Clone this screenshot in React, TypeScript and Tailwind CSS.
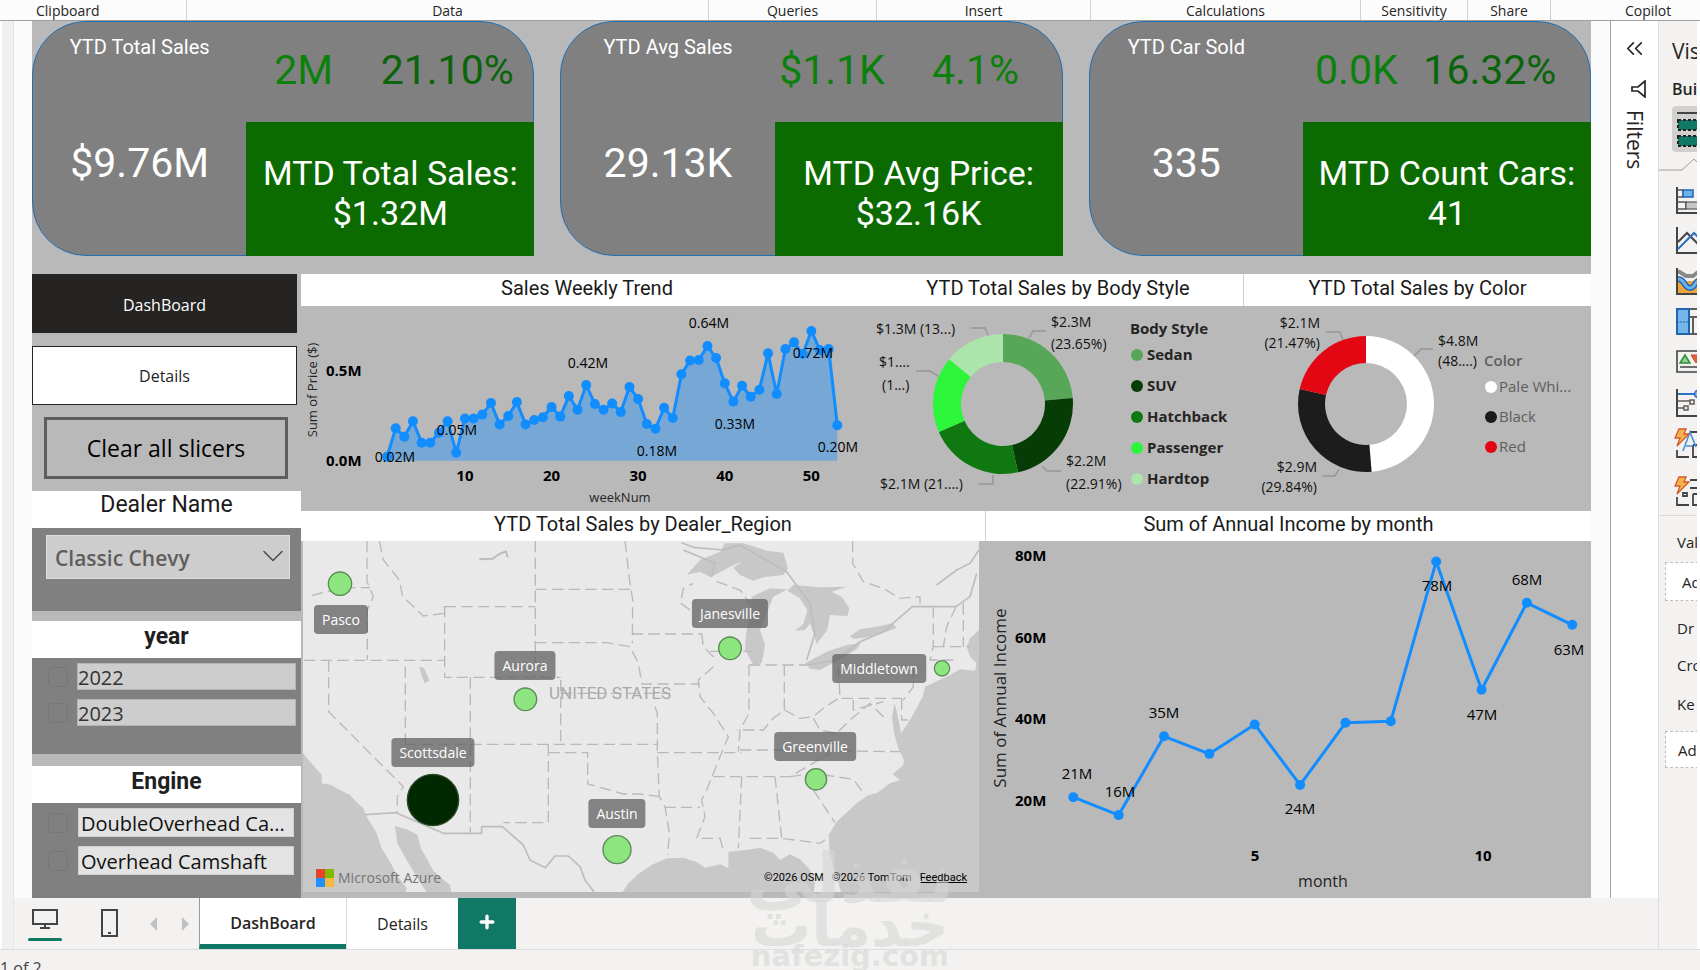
import { ChevronDown, ChevronsLeft, Plus } from "lucide-react";

const kpis = [
    { title: "YTD Total Sales", value: "$9.76M", diff: "2M", growth: "21.10%", mtdLabel: "MTD Total Sales:", mtd: "$1.32M", growthColor: "text-[#0a640a]", inset: "" },
    { title: "YTD Avg Sales", value: "29.13K", diff: "$1.1K", growth: "4.1%", mtdLabel: "MTD Avg Price:", mtd: "$32.16K", growthColor: "text-[#0b800b]", inset: "" },
    { title: "YTD Car Sold", value: "335", diff: "0.0K", growth: "16.32%", mtdLabel: "MTD Count Cars:", mtd: "41", growthColor: "text-[#0a640a]", inset: "pr-5" },
];

// weekly sales, thousands of dollars
const weekly = [
    22, 179, 133, 218, 100, 100, 155, 218, 44, 234, 234, 255, 319, 201, 247, 325, 201, 225, 240, 297, 244, 358, 282, 419, 314, 282, 317,
    269, 408, 341, 203, 177, 293, 236, 478, 555, 557, 635, 568, 428, 327, 415, 354, 393, 594, 369, 618, 655, 590, 718, 612, 618, 196,
];

const weeklyLabels = [
    { text: "0.02M", x: 94, y: 156 },
    { text: "0.05M", x: 156, y: 129 },
    { text: "0.42M", x: 287, y: 62 },
    { text: "0.18M", x: 356, y: 150 },
    { text: "0.64M", x: 408, y: 22 },
    { text: "0.33M", x: 434, y: 123 },
    { text: "0.72M", x: 512, y: 52 },
    { text: "0.20M", x: 537, y: 146 },
];

// monthly income, millions
const income = [20.7, 16.3, 35.6, 31.3, 38.5, 23.7, 38.9, 39.3, 78.4, 47, 68.3, 62.9];

const incomeLabels = [
    { text: "21M", x: 92, y: 238 },
    { text: "16M", x: 135, y: 256 },
    { text: "35M", x: 179, y: 177 },
    { text: "24M", x: 315, y: 273 },
    { text: "78M", x: 452, y: 50 },
    { text: "47M", x: 497, y: 179 },
    { text: "68M", x: 542, y: 44 },
    { text: "63M", x: 584, y: 114 },
];

const bodyStyles = [
    { name: "Sedan", share: 23.65, color: "#58a758" },
    { name: "SUV", share: 22.91, color: "#063c06" },
    { name: "Hatchback", share: 21.9, color: "#107810" },
    { name: "Passenger", share: 17.6, color: "#2df53a" },
    { name: "Hardtop", share: 13.94, color: "#abe5ab" },
];

const colors = [
    { name: "Pale Whi...", share: 48.69, color: "#ffffff" },
    { name: "Black", share: 29.84, color: "#1c1c1c" },
    { name: "Red", share: 21.47, color: "#e30613" },
];

const cities = [
    { name: "Pasco", x: 38, y: 64 },
    { name: "Aurora", x: 222, y: 110 },
    { name: "Scottsdale", x: 130, y: 197 },
    { name: "Austin", x: 314, y: 258 },
    { name: "Janesville", x: 427, y: 58 },
    { name: "Middletown", x: 576, y: 113 },
    { name: "Greenville", x: 512, y: 191 },
];

const ribbon = [
    { name: "Data", width: "w-[522px]" },
    { name: "Queries", width: "w-[168px]" },
    { name: "Insert", width: "w-[214px]" },
    { name: "Calculations", width: "w-[270px]" },
    { name: "Sensitivity", width: "w-[107px]" },
    { name: "Share", width: "w-[83px]" },
];

const DIN = "font-[Roboto,'Noto_Sans',sans-serif]";

function Ribbon() {
    return (
        <header className="flex h-[21px] shrink-0 items-stretch border-b border-[#a0a0a0] bg-[#fcfcfc] text-sm leading-[22px] text-[#252423]">
            <div className="w-[187px] shrink-0 border-r border-[#d2d0ce] pl-9">Clipboard</div>
            {ribbon.map((g) => (
                <div key={g.name} className={`${g.width} shrink-0 border-r border-[#d2d0ce] text-center`}>
                    {g.name}
                </div>
            ))}
            <div className="min-w-0 flex-1 pl-[74px]">Copilot</div>
        </header>
    );
}

function KpiCard({ kpi }: { kpi: (typeof kpis)[number] }) {
    return (
        <article className={`${DIN} grid h-[235px] grid-cols-[214fr_288fr] rounded-l-[54px] rounded-tr-[54px] border border-[#1f70b5] bg-[#808080] text-white`}>
            <div className={`flex flex-col items-center pt-[11px] ${kpi.inset}`}>
                <h2 className="text-xl leading-7">{kpi.title}</h2>
                <p className="pt-[78px] text-[41px] leading-[48px]">{kpi.value}</p>
            </div>
            <div className="flex flex-col">
                <div className={`grid h-[100px] shrink-0 grid-cols-[2fr_3fr] pt-6 text-center text-[41px] leading-[48px] text-[#0b800b] ${kpi.inset}`}>
                    <span>{kpi.diff}</span>
                    <span className={kpi.growthColor}>{kpi.growth}</span>
                </div>
                <div className="-mr-px -mb-px flex flex-1 flex-col justify-center bg-[#0b6a00] pt-2 text-center text-[34px] leading-10 whitespace-nowrap">
                    <p>{kpi.mtdLabel}</p>
                    <p>{kpi.mtd}</p>
                </div>
            </div>
        </article>
    );
}

function Sidebar() {
    return (
        <aside className="flex w-[269px] shrink-0 flex-col">
            <button className="h-[59px] w-[265px] bg-[#252423] pt-0.5 text-base text-white">DashBoard</button>
            <button className="mt-[13px] h-[59px] w-[265px] border border-[#252423] bg-white text-base text-[#252423]">Details</button>
            <button className="mt-3 ml-3 h-[62px] w-[244px] border-[3px] border-[#605e5c] text-[23px] text-black">Clear all slicers</button>

            <section className="mt-3 bg-[#808080]">
                <label htmlFor="dealer" className={`${DIN} block h-[37px] bg-white text-center text-[23px] leading-7 text-[#1a1a1a]`}>
                    Dealer Name
                </label>
                <div className="relative h-[83px] pt-[7px] pr-[11px] pl-3.5">
                    <select
                        id="dealer"
                        className="h-11 w-full appearance-none border border-[#dcdcdc] bg-[#cdcdcd] pt-1 pl-2 text-[21px] font-semibold text-[#605e5c]"
                    >
                        <option>Classic Chevy</option>
                    </select>
                    <ChevronDown className="pointer-events-none absolute top-2.5 right-2.5 size-9 text-[#4a4a4a]" strokeWidth={1} />
                </div>
            </section>

            <section className="mt-2.5 h-[133px] bg-[#808080]">
                <h3 className={`${DIN} h-[37px] bg-white text-center text-[23px] leading-8 font-bold text-[#1f1f1f]`}>year</h3>
                <div className="flex flex-col gap-[9px] pt-[5px] pr-[5px] pl-4">
                    {["2022", "2023"].map((y) => (
                        <label key={y} className="flex h-[27px] items-center gap-[9px] text-xl text-[#333]">
                            <input type="checkbox" className="size-5 shrink-0 appearance-none rounded-sm border border-[#777]" />
                            <span className="h-full flex-1 border border-[#b4b4b4] bg-[#cdcdcd] leading-[27px]">{y}</span>
                        </label>
                    ))}
                </div>
            </section>

            <section className="mt-3 flex-1 bg-[#808080]">
                <h3 className={`${DIN} h-[37px] bg-white text-center text-[23px] leading-8 font-bold text-[#1f1f1f]`}>Engine</h3>
                <div className="flex flex-col gap-[9px] pt-[5px] pr-[7px] pl-4">
                    {["DoubleOverhead Ca...", "Overhead Camshaft"].map((e) => (
                        <label key={e} className="flex h-[29px] items-center gap-2.5 text-xl text-[#111]">
                            <input type="checkbox" className="size-5 shrink-0 appearance-none rounded-sm border border-[#777]" />
                            <span className="h-full flex-1 border border-[#d0d0d0] bg-[#e3e3e3] pl-0.5 leading-[29px] whitespace-nowrap">{e}</span>
                        </label>
                    ))}
                </div>
            </section>
        </aside>
    );
}

function WeeklyTrend() {
    const pts = weekly.map((v, i) => ({ x: 86 + i * 8.66, y: 154.7 - v * 0.1807 }));
    const line = pts.map((p) => `${p.x},${p.y}`).join(" ");
    return (
        <svg viewBox="0 0 572 205" className="block w-full">
            <polygon points={`86,154.7 ${line} 536.3,154.7`} fill="#118dff" fillOpacity="0.4" />
            <polyline points={line} fill="none" stroke="#118dff" strokeWidth="3" strokeLinejoin="round" />
            {pts.map((p, i) => (
                <circle key={i} cx={p.x} cy={p.y} r="5" fill="#118dff" />
            ))}
            <g fontSize="14" fill="#000" textAnchor="middle">
                {weeklyLabels.map((l) => (
                    <text key={l.text} x={l.x} y={l.y}>{l.text}</text>
                ))}
            </g>
            <g fontSize="15" fontWeight="700" fill="#000">
                <text x="25" y="70">0.5M</text>
                <text x="25" y="160">0.0M</text>
                {[10, 20, 30, 40, 50].map((w) => (
                    <text key={w} x={86 + (w - 1) * 8.66} y="175" textAnchor="middle">{w}</text>
                ))}
            </g>
            <text x="319" y="196" fontSize="13" fill="#252423" textAnchor="middle">weekNum</text>
            <text transform="translate(16 84) rotate(-90)" fontSize="13" fill="#252423" textAnchor="middle">Sum of Price ($)</text>
        </svg>
    );
}

function Donut({ data, cx, cy, outer, inner }: { data: typeof bodyStyles; cx: number; cy: number; outer: number; inner: number }) {
    const at = (pct: number, r: number) => {
        const a = (pct / 100) * Math.PI * 2;
        return `${cx + r * Math.sin(a)} ${cy - r * Math.cos(a)}`;
    };
    let sum = 0;
    return (
        <g>
            {data.map((d) => {
                const from = sum;
                const to = (sum += d.share);
                return (
                    <path
                        key={d.name}
                        d={`M${at(from, outer)} A${outer} ${outer} 0 0 1 ${at(to, outer)} L${at(to, inner)} A${inner} ${inner} 0 0 0 ${at(from, inner)} Z`}
                        fill={d.color}
                    />
                );
            })}
        </g>
    );
}

function BodyStyleChart() {
    return (
        <svg viewBox="0 0 370 205" className="block w-full">
            <Donut data={bodyStyles} cx={130} cy={98} outer={70} inner={42} />
            <g fill="none" stroke="#979797" strokeWidth="1.5">
                <path d="M98 22h14l3 7" />
                <path d="M173 25h-13l-4 7" />
                <path d="M43 65h14l8 5" />
                <path d="M105 178h15v-9" />
                <path d="M188 165h-14l-5-5" />
            </g>
            <g fontSize="14" fill="#111">
                <text x="3" y="28">$1.3M (13...)</text>
                <text x="178" y="21">$2.3M</text>
                <text x="178" y="43">(23.65%)</text>
                <text x="6" y="61">$1....</text>
                <text x="9" y="84">(1...)</text>
                <text x="7" y="183">$2.1M (21....)</text>
                <text x="193" y="160">$2.2M</text>
                <text x="193" y="183">(22.91%)</text>
            </g>
            <g fontSize="15" fontWeight="700" fill="#252423">
                <text x="257" y="28">Body Style</text>
                {bodyStyles.map((b, i) => (
                    <g key={b.name}>
                        <circle cx="264" cy={49 + i * 31} r="6" fill={b.color} />
                        <text x="274" y={54 + i * 31}>{b.name}</text>
                    </g>
                ))}
            </g>
        </svg>
    );
}

function ColorChart() {
    return (
        <svg viewBox="0 0 348 205" className="block w-full">
            <Donut data={colors} cx={123} cy={98} outer={68} inner={41} />
            <g fill="none" stroke="#979797" strokeWidth="1.5">
                <path d="M83 26h14l3 8" />
                <path d="M190 43h-12l-7 7" />
                <path d="M79 170h13l4-7" />
            </g>
            <g fontSize="14" fill="#111">
                <text x="77" y="22" textAnchor="end">$2.1M</text>
                <text x="77" y="42" textAnchor="end">(21.47%)</text>
                <text x="195" y="40">$4.8M</text>
                <text x="195" y="60">(48....)</text>
                <text x="74" y="166" textAnchor="end">$2.9M</text>
                <text x="74" y="186" textAnchor="end">(29.84%)</text>
            </g>
            <text x="241" y="60" fontSize="15" fontWeight="600" fill="#605e5c">Color</text>
            {colors.map((c, i) => (
                <g key={c.name}>
                    <circle cx="248" cy={81 + i * 30} r="6" fill={c.color} />
                    <text x="256" y={86 + i * 30} fontSize="15" fill="#605e5c">{c.name}</text>
                </g>
            ))}
        </svg>
    );
}

function IncomeChart() {
    const pts = income.map((v, i) => ({ x: 88.3 + i * 45.36, y: 259 - (v - 20) * 4.083 }));
    return (
        <svg viewBox="0 0 606 357" className="block w-full">
            <polyline points={pts.map((p) => `${p.x},${p.y}`).join(" ")} fill="none" stroke="#118dff" strokeWidth="3" strokeLinejoin="round" />
            {pts.map((p, i) => (
                <circle key={i} cx={p.x} cy={p.y} r="5" fill="#118dff" />
            ))}
            <g fontSize="15" fill="#000" textAnchor="middle">
                {incomeLabels.map((l) => (
                    <text key={l.text} x={l.x} y={l.y}>{l.text}</text>
                ))}
            </g>
            <g fontSize="15" fontWeight="700" fill="#000">
                {[80, 60, 40, 20].map((v, i) => (
                    <text key={v} x="30" y={20 + i * 81.5}>{v}M</text>
                ))}
                <text x="270" y="320" textAnchor="middle">5</text>
                <text x="498" y="320" textAnchor="middle">10</text>
            </g>
            <text x="338" y="346" fontSize="16" fill="#252423" textAnchor="middle">month</text>
            <text transform="translate(21 157) rotate(-90)" fontSize="17" fill="#252423" textAnchor="middle">Sum of Annual Income</text>
        </svg>
    );
}

function DealerMap() {
    return (
        <div className="relative mr-1.5 ml-0.5 overflow-hidden bg-[#e9e9e9]">
            <svg viewBox="39 123 2028 1053" className="block w-full">
                {/* oceans */}
                <g fill="#c8c8c8">
                    <path d="M39 760L60 785 95 825 95 850 125 856 150 870 180 885 196 903 220 925 230 950 260 1000 275 1045 300 1085 320 1125 350 1165 345 1180H39z" />
                    <path d="M315 978L350 988 383 1005 392 1045 410 1075 430 1112 455 1135 480 1155 485 1180H412L380 1130 350 1080 322 1030z" />
                    <path d="M995 1180L1015 1150 1045 1122 1085 1095 1130 1075 1180 1073 1220 1086 1245 1103 1290 1093 1315 1105V1055L1370 1050 1410 1043 1450 1058 1470 1080 1500 1063 1530 1078 1560 1110 1575 1150 1570 1180z" />
                    <path d="M1655 1180L1630 1100 1618 1050 1616 1005 1640 965 1700 910 1735 885 1760 880 1800 850 1830 840 1808 822 1840 795 1842 780 1825 745 1812 700 1806 650 1814 610 1824 650 1833 700 1860 660 1898 590 1905 560 1980 525 2010 508 2055 512 2060 490 2040 470 2030 440 2040 415 2070 388V1180z" />
                </g>
                {/* great lakes */}
                <g fill="#c8c8c8">
                    <path d="M1190 225L1230 180 1290 155 1305 130 1360 130 1430 152 1480 158 1494 205 1480 225 1420 232 1390 242 1350 225 1330 203 1355 185 1320 200 1262 232 1230 215z" />
                    <path d="M1385 290L1440 265 1492 268 1450 290 1432 335 1410 390 1425 435 1415 490 1390 495 1365 450 1368 400 1380 350z" />
                    <path d="M1492 272L1510 255 1590 262 1670 260 1625 275 1655 290 1678 325 1672 348 1620 345 1612 390 1580 432 1570 400 1560 370 1545 390 1515 392 1540 372 1552 330 1530 295z" />
                    <path d="M1545 490L1610 455 1670 435 1712 430 1700 448 1650 478 1590 510 1560 506z" />
                    <path d="M1680 408L1710 388 1760 380 1808 370 1820 384 1770 402 1720 414 1690 416z" />
                    <path d="M388 500l14 4 16 38-14 8-10-26z" />
                </g>
                <path d="M1840 548L1985 512 1978 525 1900 553z" fill="#e9e9e9" />
                {/* national borders */}
                <g fill="none" stroke="#bdbdbd" strokeWidth="5" strokeLinejoin="round">
                    <path d="M225 944L318 938 460 1000H575V980H637L700 1035 720 1080 766 1103 795 1068H835L870 1100 885 1140 912 1175" />
                    <path d="M1175 128L1210 142 1300 150 1350 135 1490 215 1515 250 1560 310 1575 400 1550 480M1180 150L1275 190 1265 230M1550 495L1640 480 1710 425 1780 395 1867 320H1998L2040 290 2060 220M1940 255L2000 210 2040 190 2067 150" />
                    <path d="M568 178l40-2 20-14 20-8 5 18" strokeWidth="6" />
                </g>
                {/* state lines */}
                <g fill="none" stroke="#b9b9b9" strokeWidth="4" strokeDasharray="34 16">
                    <path d="M231 123V245L250 290 232 330V480M268 123L280 180 328 240 338 290 400 348 463 340V318M65 287L110 275 190 263H240M42 481H463M464 318V532H812M464 320H736M736 123V532M736 268H1025M1005 123L1020 250 1028 300 1027 430M736 428H950L1020 440 1045 490 1056 552H1230M1025 402H1235M116 481V635L340 860 322 890 322 938M346 500V735M541 532V998M812 540V733M541 733H1102M345 733H541M775 733V968H640M775 758H893V852L1000 882H1050L1110 890M1095 620L1102 640V757L1108 890 1125 920 1138 1000 1133 1065M812 580H1140M1102 758H1355M1123 922H1230" />
                    <path d="M1235 400L1240 440 1275 475M1260 454H1390M1200 330L1172 310 1180 265 1210 250M1280 245L1350 270 1380 310M1270 500L1225 540 1230 590 1270 640 1315 710 1290 770 1250 870 1235 900 1245 950 1220 1015H1290L1300 1050M1377 495V640L1350 690 1345 755M1483 495V630L1450 655 1420 690 1340 690M1377 495H1550M1483 630L1530 655 1570 650 1600 625 1645 595M1645 500L1650 595H1835M1350 750L1450 750 1830 755M1270 830H1500L1620 760M1355 830L1345 1045M1455 830L1475 1015M1380 1015H1475L1590 1030 1605 1020M1570 870L1635 968M1500 830L1570 820 1690 838 1725 885M1570 655L1590 690 1640 700 1680 660 1740 610 1790 660M1690 600V630L1780 605M1835 595V660H1860M1688 123V190L1720 245 1780 265 1830 295 1890 290V320M1930 320V440L1920 480H1990M1998 320L1970 380 1960 440M2020 310V440M1930 440H2040M1870 500V560L1840 600" />
                </g>
                <g fill="#8de57f" stroke="#5c8a58" strokeWidth="4">
                    <circle cx="150" cy="251" r="35" />
                    <circle cx="706" cy="598" r="34" />
                    <circle cx="429" cy="900" r="77" fill="#022802" stroke="#2c4a2c" />
                    <circle cx="981" cy="1049" r="42" />
                    <circle cx="1320" cy="445" r="34" />
                    <circle cx="1956" cy="505" r="23" />
                    <circle cx="1578" cy="838" r="32" />
                </g>
            </svg>
            <span className={`${DIN} absolute top-[140px] left-[246px] text-[17px] leading-6 text-[#aaaaaa]`}>UNITED STATES</span>
            {cities.map((c) => (
                <span
                    key={c.name}
                    className="absolute h-[29px] -translate-x-1/2 rounded bg-[#606060]/75 px-2 text-sm leading-[29px] text-white"
                    style={{ left: c.x, top: c.y }}
                >
                    {c.name}
                </span>
            ))}
            <div className="absolute bottom-1 left-[13px] flex items-center gap-1 text-sm leading-5 font-medium text-[#757575]">
                <svg viewBox="0 0 18 18" className="size-[18px]">
                    <path fill="#e8452c" d="M0 0h9v9H0z" />
                    <path fill="#7fba00" d="M9 0h9v9H9z" />
                    <path fill="#1e90ff" d="M0 9h9v9H0z" />
                    <path fill="#f5b93f" d="M9 9h9v9H9z" />
                </svg>
                Microsoft Azure
            </div>
            <div className={`${DIN} absolute right-3 bottom-1 flex gap-2 text-[11px] leading-5 text-black`}>
                <span>©2026 OSM</span>
                <span>©2026 TomTom</span>
                <a href="#feedback" className="underline">Feedback</a>
            </div>
        </div>
    );
}

function Panel({ title, header, children, className }: { title: string; header: string; children: React.ReactNode; className?: string }) {
    return (
        <section className={className}>
            <h3 className={`${DIN} ${header} bg-white text-center text-xl text-[#1a1a1a]`}>{title}</h3>
            {children}
        </section>
    );
}

function FiltersPane() {
    return (
        <div className="flex w-[49px] shrink-0 flex-col items-center border-x border-l-[#a6a6a6] border-r-[#dddddd] bg-white pt-3.5">
            <ChevronsLeft className="size-[27px] text-[#252423]" strokeWidth={1.5} />
            <svg viewBox="0 0 18 18" className="mt-[18px] ml-1.5 size-[18px]" fill="none" stroke="#252423" strokeWidth="1.7">
                <path d="M16 1v16L9 11H3V7h6z" />
            </svg>
            <span className="mt-3 text-[21px] leading-6 font-medium text-[#252423] [writing-mode:vertical-rl]">Filters</span>
        </div>
    );
}

function VisualsPane() {
    const frame = { fill: "none", stroke: "#444", strokeWidth: 2 };
    return (
        <aside className="w-[38px] shrink-0 overflow-hidden bg-[#f3f2f1] whitespace-nowrap text-[#252423]">
            <h2 className="pt-3.5 pl-[13px] text-[21px] leading-8">Vis</h2>
            <h3 className="mt-2.5 pl-[13px] text-base leading-6 font-semibold">Bui</h3>
            <button className="mt-[5px] ml-[13px] block h-[46px] w-[40px] rounded bg-[#d2d0ce] pl-1">
                <svg width="36" height="36" viewBox="0 0 36 36">
                    <path d="M1 2h35" {...frame} />
                    <path d="M2 9h34v10H2zM2 25h34v10H2z" fill="#117865" stroke="#222" strokeWidth="2" strokeDasharray="3 2" />
                </svg>
            </button>
            <svg width="39" height="348" viewBox="0 0 39 348" className="mt-1.5 block">
                <path d="M0 12h23L35 1l4 4" fill="none" stroke="#a19f9d" />
                <g {...frame}>
                    {/* stacked bar */}
                    <path d="M18 29v26h21" />
                    <path d="M18 32h6v7h-6M18 44h9v7h-9" strokeWidth="1.5" stroke="#555" />
                    <path d="M27 44h12v7H27z" fill="#c8c6c4" strokeWidth="1" />
                    <path d="M24 32h10v7H24z" fill="#6cb2eb" stroke="#1f66b0" strokeWidth="1.5" />
                    {/* line */}
                    <path d="M18 69v26h21" />
                    <path d="M19 84l9-9 11 11" />
                    <path d="M19 91l16-16 4 4" stroke="#2a72c3" />
                    {/* ribbon */}
                    <path d="M19 118l8 5h7l5-4v16H19z" fill="#f2a33a" stroke="none" />
                    <path d="M19 113l8 5h7l5-4" stroke="#8a8886" strokeWidth="4" />
                    <path d="M19 121c7 0 6 9 12 9 5 0 5-6 8-7" stroke="#1f66b0" strokeWidth="6" />
                    <path d="M19 121c7 0 6 9 12 9 5 0 5-6 8-7" stroke="#6cb2eb" strokeWidth="3" />
                    <path d="M18 110v26h21" />
                    {/* treemap */}
                    <path d="M18 151h12v25H18z" fill="#74b5ea" stroke="#1f66b0" />
                    <path d="M18 164h12" stroke="#1f66b0" strokeWidth="1" strokeDasharray="2 1" />
                    <path d="M31 151h9M31 159h9M34 159v17M31 176h9" stroke="#605e5c" />
                    {/* kpi */}
                    <path d="M39 193H18v21h21M21 209h18" strokeWidth="1.6" />
                    <path d="M21 205l5-8 5 8z" fill="#8fd18f" stroke="#2e8f3e" strokeWidth="1.5" />
                    <path d="M32 197h10l-5 8z" fill="#e2653a" stroke="#c9472a" strokeWidth="1" />
                    {/* decomposition */}
                    <path d="M18 231v27h21" />
                    <path d="M19 236h17" stroke="#2a72c3" />
                    <circle cx="39" cy="236" r="3.5" fill="#7ab8ec" stroke="#2a72c3" strokeWidth="1.5" />
                    <path d="M19 243h12v-1h4v4h-4v-3M19 250h6v-2h4v4h-4v-2" strokeWidth="1.5" stroke="#605e5c" />
                    {/* slicers */}
                    <path d="M18 292v7h12M31 274h8M34 287v12h5M34 287h5" strokeWidth="1.8" />
                    <path d="M24 293l7-19 6 15M27 288h7" stroke="#4a90d9" strokeWidth="1.6" />
                    <path d="M20 271h7l-2 5h5l-12 12 3-8h-5z" fill="#f6b24b" stroke="#d3592a" strokeWidth="1.3" />
                    <path d="M18 339v8h12M31 322h8M31 330h8M34 336v11h5M34 336h5M24 335h4v3h-4z" strokeWidth="1.8" />
                    <path d="M20 319h7l-2 5h5l-12 12 3-8h-5z" fill="#f6b24b" stroke="#d3592a" strokeWidth="1.3" />
                </g>
            </svg>
            <div className="mt-[9px] border-t border-[#dddbd9] pt-3.5 text-[15px] leading-6">
                <p className="pl-[18px]">Val</p>
                <button className="mt-2 ml-1.5 block h-[39px] w-20 border border-dashed border-[#c0bebc] bg-white pl-4 text-left">Ad</button>
                <p className="mt-[15px] pl-[18px] font-medium">Dr</p>
                <p className="mt-[13px] pl-[18px]">Cro</p>
                <p className="mt-[15px] pl-[18px]">Ke</p>
                <button className="mt-[15px] ml-1.5 block h-[37px] w-20 border border-dashed border-[#c0bebc] bg-white pl-3 text-left">Ad</button>
            </div>
        </aside>
    );
}

function PageTabs() {
    return (
        <nav className="flex h-[51px] shrink-0 items-stretch border-r border-[#dddddd] bg-[#f3f2f1] text-base text-[#252423]">
            <button className="ml-3.5 flex w-[34px] flex-col items-center pt-2.5" aria-label="Desktop layout">
                <svg width="28" height="21" viewBox="0 0 28 21" fill="none" stroke="#444" strokeWidth="2">
                    <path d="M2 2h24v14H2zM14 16v4M9 20h10" />
                </svg>
                <span className="mt-[9px] h-[3px] w-full rounded-full bg-[#117865]" />
            </button>
            <button className="ml-[38px] w-5" aria-label="Mobile layout">
                <svg width="20" height="31" viewBox="0 0 20 31" fill="none" stroke="#444" strokeWidth="2">
                    <path d="M2 2h15v26H2zM8 25h3" />
                </svg>
            </button>
            <button className="ml-[30px] text-[#c0c0c0]" aria-label="Previous page">
                <svg width="7" height="14" viewBox="0 0 7 14" fill="currentColor"><path d="M7 0v14L0 7z" /></svg>
            </button>
            <button className="ml-[25px] text-[#c0c0c0]" aria-label="Next page">
                <svg width="7" height="14" viewBox="0 0 7 14" fill="currentColor"><path d="M0 0v14l7-7z" /></svg>
            </button>
            <button className="ml-2.5 w-[147px] border-b-[5px] border-l border-[#117865] border-l-[#999] bg-white pt-1 font-semibold">DashBoard</button>
            <button className="w-[112px] border-l border-[#dddddd] bg-white">Details</button>
            <button className="flex w-[58px] items-center justify-center bg-[#117865] pb-1 text-white" aria-label="New page">
                <Plus className="size-5" strokeWidth={4} />
            </button>
        </nav>
    );
}

export default function App() {
    return (
        <div className="relative flex min-h-screen flex-col overflow-hidden bg-[#f3f2f1] font-['Open_Sans','Noto_Sans',sans-serif]">
            <Ribbon />
            <div className="flex border-x-2 border-r-[3px] border-white">
                <div className="w-3 shrink-0 border-r border-[#e4e4e4] bg-[#f0f0f0]" />
                <div className="flex min-w-0 flex-1 flex-col">
                    <div className="flex">
                        <main className="flex-1 bg-[#fbfbfb] pr-[19px] pl-[18px]">
                            <div className="bg-[#b9b9b9]">
                                <div className="grid grid-cols-3 gap-[26px]">
                                    {kpis.map((k) => (
                                        <KpiCard key={k.title} kpi={k} />
                                    ))}
                                </div>
                                <div className="flex pt-[18px]">
                                    <Sidebar />
                                    <div className="min-w-0 flex-1">
                                        <div className="grid grid-cols-[572fr_370fr_348fr]">
                                            <Panel title="Sales Weekly Trend" header="h-8 leading-7"><WeeklyTrend /></Panel>
                                            <Panel title="YTD Total Sales by Body Style" header="h-8 leading-7"><BodyStyleChart /></Panel>
                                            <Panel title="YTD Total Sales by Color" header="h-8 border-l border-[#d0d0d0] leading-7"><ColorChart /></Panel>
                                        </div>
                                        <div className="grid grid-cols-[684fr_606fr]">
                                            <Panel title="YTD Total Sales by Dealer_Region" header="h-[30px] leading-[26px]"><DealerMap /></Panel>
                                            <Panel title="Sum of Annual Income by month" header="h-[30px] border-l border-[#d0d0d0] leading-[26px]"><IncomeChart /></Panel>
                                        </div>
                                    </div>
                                </div>
                            </div>
                        </main>
                        <FiltersPane />
                    </div>
                    <PageTabs />
                </div>
                <VisualsPane />
            </div>
            <footer className="border-t border-[#dddddd] pt-2 text-base leading-5 text-[#444]">1 of 2</footer>
            <div dir="rtl" className="pointer-events-none absolute top-[852px] left-[748px] flex w-[204px] flex-col items-center font-['DejaVu_Sans',sans-serif] font-bold text-[#d6d6d6]/60">
                <span className="text-[68px] leading-[54px]">نفذلي</span>
                <span className="text-[60px] leading-[38px]">خدمات</span>
                <span dir="ltr" className="text-[29px] leading-[24px]">nafezig.com</span>
            </div>
        </div>
    );
}
